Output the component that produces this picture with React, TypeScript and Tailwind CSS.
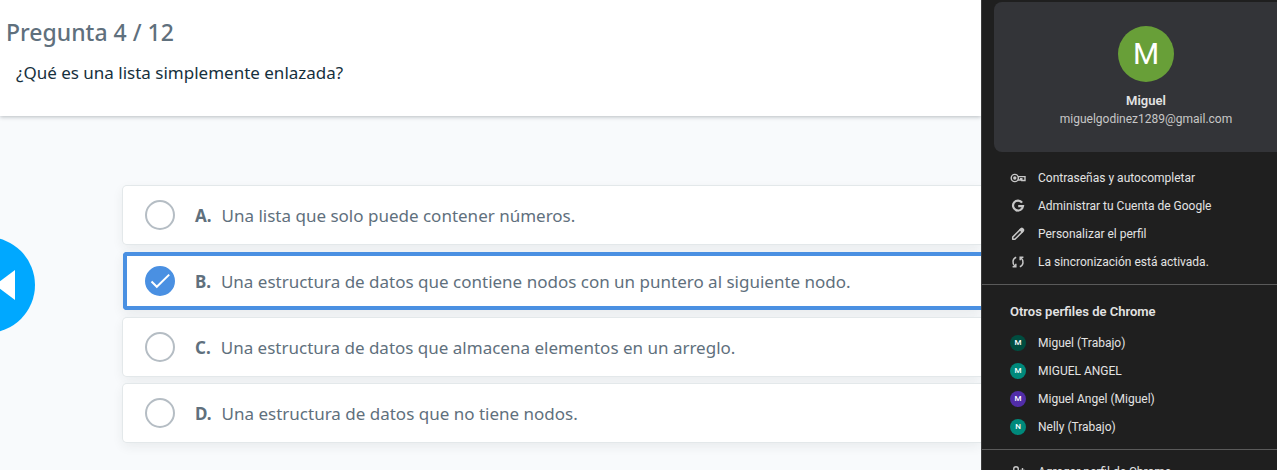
import React from "react";

const answers = [
  { letter: "A", text: "Una lista que solo puede contener números." },
  { letter: "B", text: "Una estructura de datos que contiene nodos con un puntero al siguiente nodo." },
  { letter: "C", text: "Una estructura de datos que almacena elementos en un arreglo." },
  { letter: "D", text: "Una estructura de datos que no tiene nodos." },
];

const profiles = [
  { initial: "M", name: "Miguel (Trabajo)", color: "bg-[#004d40]" },
  { initial: "M", name: "MIGUEL ANGEL", color: "bg-[#00897b]" },
  { initial: "M", name: "Miguel Angel (Miguel)", color: "bg-[#512da8]" },
  { initial: "N", name: "Nelly (Trabajo)", color: "bg-[#00897b]" },
];

function KeyIcon() {
  return (
    <svg viewBox="0 0 16 16" className="size-4" fill="none" stroke="currentColor" strokeWidth="1.4" aria-hidden="true">
      <circle cx="4.8" cy="8" r="3.6" />
      <circle cx="4.8" cy="8" r="1.7" fill="currentColor" stroke="none" />
      <path d="M8 6.6h7v3.9h-3.2V8.8h-1.2v1.2H8" />
    </svg>
  );
}

function GoogleIcon() {
  return (
    <svg viewBox="0 0 16 16" className="size-4" fill="none" stroke="currentColor" strokeWidth="2.2" aria-hidden="true">
      <path d="M12.1 4.6A5 5 0 1 0 13 8.2H8.2" />
    </svg>
  );
}

function PencilIcon() {
  return (
    <svg viewBox="0 0 16 16" className="size-4" fill="none" stroke="currentColor" strokeWidth="1.5" strokeLinejoin="round" aria-hidden="true">
      <path d="M2.7 13.3v-2.2l7.7-7.7 2.2 2.2-7.7 7.7z" />
      <path d="M10 3.8l1.3-1.2q.6-.5 1.2 0l.9.9q.5.6 0 1.2L12.2 6z" fill="currentColor" />
    </svg>
  );
}

function SyncIcon() {
  return (
    <svg viewBox="0 0 16 16" className="size-4" fill="none" stroke="currentColor" strokeWidth="1.5" aria-hidden="true">
      <path d="M6.2 3.2C2.4 4.4 2 9.400 4.800 12" />
      <path d="M2.600 12.800h3.200V9.800" />
      <path d="M9.800 12.800c3.800-1.200 4.200-6.200 1.400-8.800" />
      <path d="M13.400 3.200h-3.200v3" />
    </svg>
  );
}

function AddPersonIcon() {
  return (
    <svg viewBox="0 0 16 16" className="size-4" fill="none" stroke="currentColor" strokeWidth="1.4" aria-hidden="true">
      <circle cx="6" cy="5" r="2.3" />
      <path d="M1.5 13v-1.2c0-1.6 2.2-2.6 4.5-2.6s4.5 1 4.5 2.6V13zM12.5 4v5M10 6.5h5" />
    </svg>
  );
}

const actions = [
  { label: "Contraseñas y autocompletar", Icon: KeyIcon },
  { label: "Administrar tu Cuenta de Google", Icon: GoogleIcon },
  { label: "Personalizar el perfil", Icon: PencilIcon },
  { label: "La sincronización está activada.", Icon: SyncIcon },
];

function Answer({ letter, text }: { letter: string; text: string }) {
  return (
    <label className="flex h-[58px] cursor-pointer items-center rounded-l bg-white pl-[22px] text-[17px] leading-6 text-[#5f707d] shadow-[0_0_0_1px_#e3e8ea,0_4px_12px_rgba(38,50,56,0.08)] has-checked:shadow-[inset_0_4px_#4a90e2,inset_0_-4px_#4a90e2,inset_4px_0_#4a90e2,0_4px_12px_rgba(38,50,56,0.08)]">
      <span className="grid size-[30px] shrink-0 place-items-center">
        <input
          type="radio"
          name="respuesta"
          defaultChecked={letter === "B"}
          className="peer col-start-1 row-start-1 size-[30px] appearance-none rounded-full border-2 border-[#b5bdc4] bg-white checked:border-[#4a90e2] checked:bg-[#4a90e2]"
        />
        <svg viewBox="0 0 30 30" className="pointer-events-none z-10 col-start-1 row-start-1 hidden size-[30px] peer-checked:block" fill="none" stroke="white" strokeWidth="2" aria-hidden="true">
          <path d="M6.5 15.5l5.3 5.3L24.2 8.6" />
        </svg>
      </span>
      <span className="mt-0.5 ml-5 font-bold">{letter}.</span>
      <span className="mt-0.5 ml-[10px] whitespace-nowrap">{text}</span>
    </label>
  );
}

export default function App() {
  return (
    <div className="flex h-screen overflow-hidden bg-[#f8fafc] font-['Noto_Sans','Open_Sans',sans-serif]">
      <main className="relative min-w-0 flex-1 overflow-hidden">
        <header className="h-[116px] bg-white pt-4 shadow-[0_1px_4px_rgba(38,50,56,0.3)]">
          <h1 className="pl-1.5 text-[23px] leading-8 font-medium text-[#5f707d]">Pregunta 4 / 12</h1>
          <p className="mt-[13px] pl-4 text-[17px] leading-6 text-[#16303d]">¿Qué es una lista simplemente enlazada?</p>
        </header>
        <form className="flex flex-col gap-2 pt-[70px] pl-[123px]">
          {answers.map((a) => (
            <Answer key={a.letter} letter={a.letter} text={a.text} />
          ))}
        </form>
        <button type="button" aria-label="Pregunta anterior" className="absolute top-[237px] -left-[61px] flex size-24 items-center justify-end rounded-full bg-[#00a8ff] pr-5">
          <svg viewBox="0 0 20 30" className="h-[30px] w-5" fill="white" aria-hidden="true">
            <path d="M20 0v30L0 15z" />
          </svg>
        </button>
      </main>

      <aside className="w-[296px] shrink-0 overflow-hidden border-l border-[#3c3c3c] bg-[#1f1f1f] font-['Roboto','Open_Sans',sans-serif] text-[12px] text-[#e3e3e3]">
        <section className="mt-0.5 ml-3 flex h-[150px] w-[304px] flex-col items-center rounded-lg bg-[#333438] pt-6">
          <div className="grid size-14 place-items-center rounded-full bg-[#689f38] text-[30px] leading-8 text-white">M</div>
          <h2 className="mt-[10px] text-[13px] leading-[18px] font-semibold">Miguel</h2>
          <p className="leading-[18px] text-[#c7c7c7]">miguelgodinez1289@gmail.com</p>
        </section>
        <nav className="mt-3 mb-2">
          {actions.map(({ label, Icon }) => (
            <button key={label} type="button" className="flex h-7 w-full items-center gap-3 pl-7 text-left whitespace-nowrap">
              <span className="text-[#c7c7c7]"><Icon /></span>
              {label}
            </button>
          ))}
        </nav>
        <section className="border-y border-[#5a5a5a] pt-[17px] pb-2">
          <h2 className="mb-[7px] pl-7 text-[13px] leading-5 font-semibold">Otros perfiles de Chrome</h2>
          {profiles.map((p) => (
            <button key={p.name} type="button" className="flex h-7 w-full items-center gap-3 pl-7 text-left whitespace-nowrap">
              <span className={`grid size-4 place-items-center rounded-full text-[8px] leading-4 font-medium text-white ${p.color}`}>{p.initial}</span>
              {p.name}
            </button>
          ))}
        </section>
        <button type="button" className="mt-2 flex h-7 w-full items-center gap-3 pl-7 text-left whitespace-nowrap">
          <span className="text-[#c7c7c7]"><AddPersonIcon /></span>
          Agregar perfil de Chrome
        </button>
      </aside>
    </div>
  );
}
